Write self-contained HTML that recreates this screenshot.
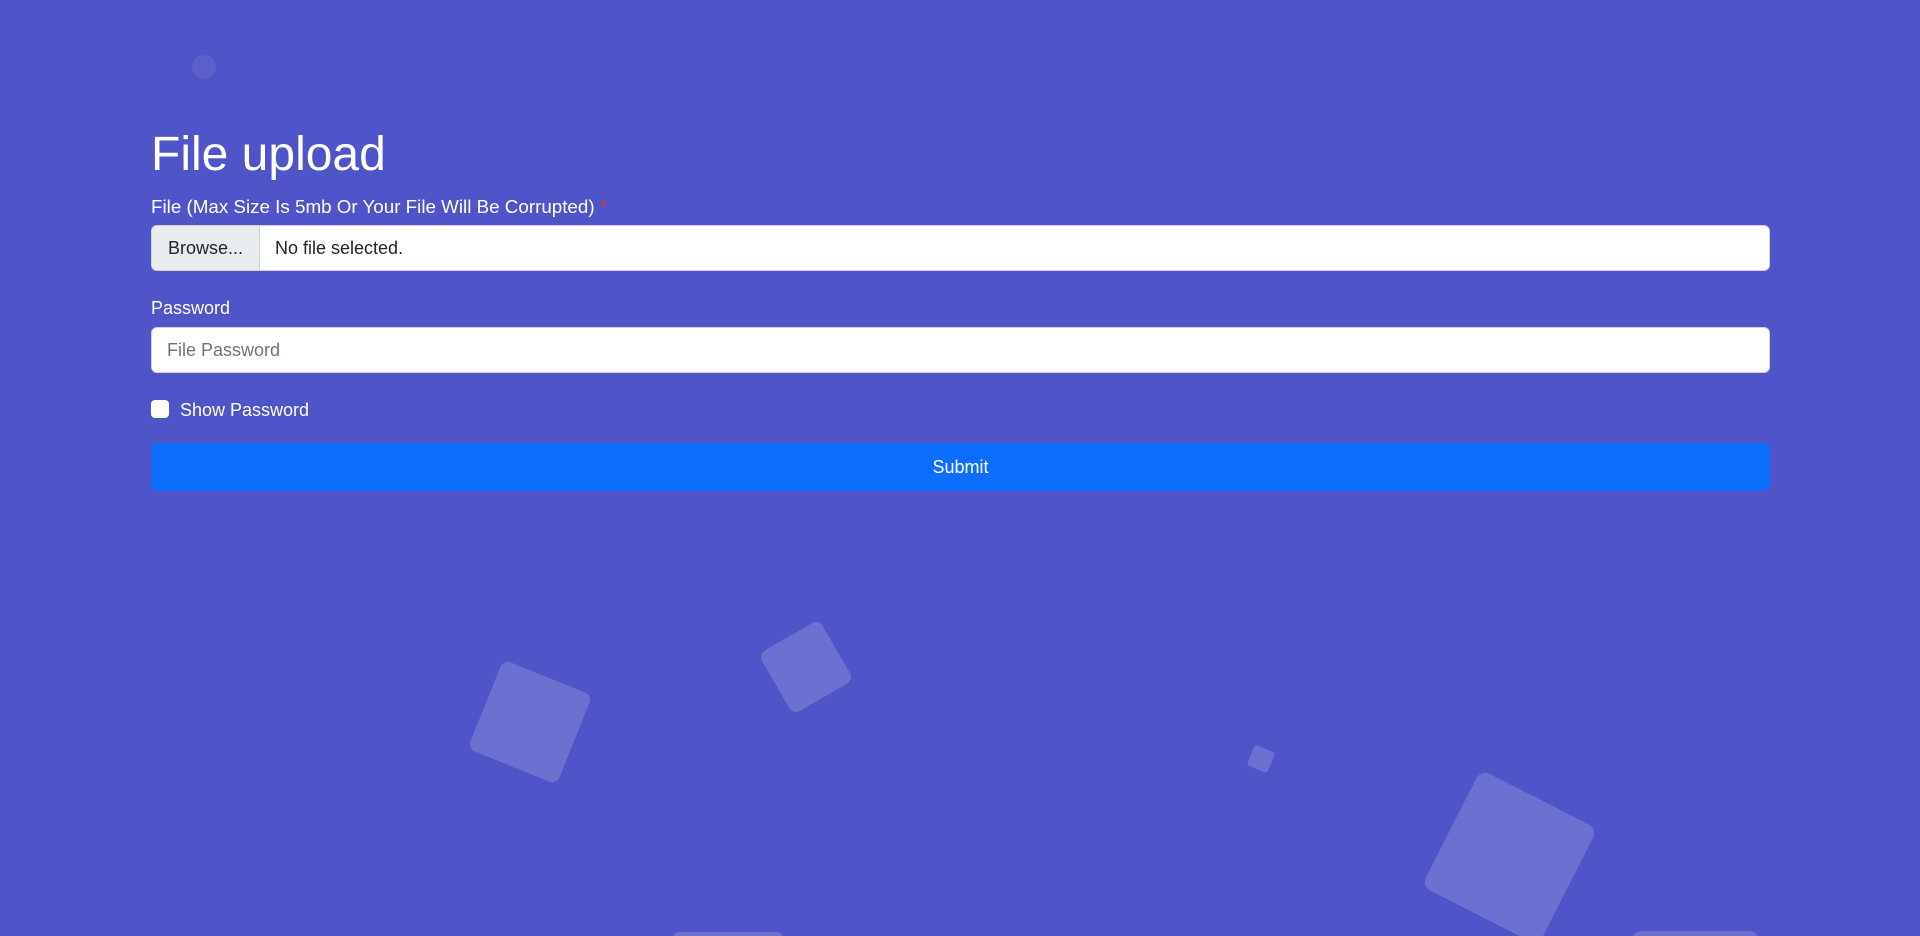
<!DOCTYPE html>
<html><head><style>
html,body{margin:0;padding:0;width:1920px;height:936px;overflow:hidden;background:#4f54c8;font-family:"Liberation Sans",sans-serif;color:#fff;position:relative}
.sq{position:absolute;background:rgba(255,255,255,0.17);border-radius:8px}
h1{position:absolute;left:151px;top:126px;margin:0;font-size:48px;font-weight:400;line-height:1.2}
.lbl{position:absolute;left:151px;font-size:18px}
.in{position:absolute;left:151px;width:1617px;height:44px;background:#fff;border:1px solid #ced4da;border-radius:6px;font-size:18px;color:#212529;overflow:hidden}
.browse{position:absolute;left:0;top:0;bottom:0;width:107px;background:#e9ecef;border-right:1px solid #ced4da;display:flex;align-items:center;justify-content:center}
.btn{position:absolute;left:151px;top:443px;width:1619px;height:48px;background:#0d6efd;border-radius:6px;color:#fff;font-size:18px;display:flex;align-items:center;justify-content:center}
</style></head><body>
<div class="sq" style="left:192px;top:55px;width:24px;height:24px;border-radius:50%;background:rgba(255,255,255,0.07)"></div>
<div class="sq" style="left:482px;top:674px;width:96px;height:96px;transform:rotate(22deg)"></div>
<div class="sq" style="left:771px;top:632px;width:70px;height:70px;transform:rotate(-30deg)"></div>
<div class="sq" style="left:1250px;top:748px;width:22px;height:22px;transform:rotate(22deg);border-radius:3px"></div>
<div class="sq" style="left:1444px;top:792px;width:131px;height:131px;transform:rotate(27deg);border-radius:10px"></div>
<div class="sq" style="left:672px;top:932px;width:112px;height:20px"></div>
<div class="sq" style="left:1633px;top:931px;width:125px;height:20px"></div>
<h1>File upload</h1>
<div class="lbl" style="top:196px;font-size:18.8px">File (Max Size Is 5mb Or Your File Will Be Corrupted) <span style="color:#dc3545">*</span></div>
<div class="in" style="top:225px"><div class="browse">Browse...</div><div style="position:absolute;left:123px;top:12px">No file selected.</div></div>
<div class="lbl" style="top:298px">Password</div>
<div class="in" style="top:327px"><div style="position:absolute;left:15px;top:12px;color:#6c757d">File Password</div></div>
<div style="position:absolute;left:151px;top:400px;width:18px;height:18px;background:#fff;border-radius:4px"></div>
<div class="lbl" style="left:180px;top:400px">Show Password</div>
<div class="btn">Submit</div>
</body></html>
